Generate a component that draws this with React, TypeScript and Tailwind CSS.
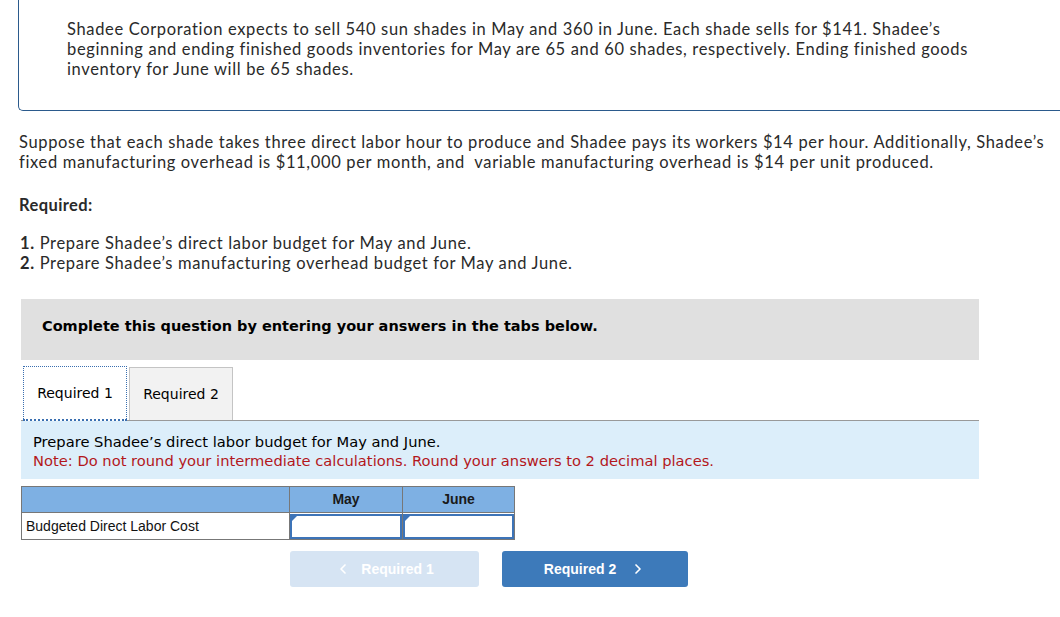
import React from "react";
import { ChevronLeft, ChevronRight } from "lucide-react";

export default function App() {
  const proxima = { fontFamily: "Lato, 'Open Sans', sans-serif" };
  return (
    <div className="w-[1060px] h-[617px] bg-white overflow-hidden text-[#222]">
      {/* Top box */}
      <div className="ml-[18px] mt-0 h-[111px] border-l border-b border-[#2b5a8c] rounded-bl-[5px] pt-[19px] pl-[48px]">
        <p className="text-[16.5px] leading-[20px] tracking-[0.65px] text-[#2a2a2a] whitespace-nowrap" style={proxima}>
          Shadee Corporation expects to sell 540 sun shades in May and 360 in June. Each shade sells for $141. Shadee’s
          <br />
          beginning and ending finished goods inventories for May are 65 and 60 shades, respectively. Ending finished goods
          <br />
          inventory for June will be 65 shades.
        </p>
      </div>

      <p className="ml-[19px] mt-[21px] text-[16.5px] leading-[20px] tracking-[0.65px] text-[#2a2a2a] whitespace-nowrap" style={proxima}>
        Suppose that each shade takes three direct labor hour to produce and Shadee pays its workers $14 per hour. Additionally, Shadee’s
        <br />
        fixed manufacturing overhead is $11,000 per month, and&nbsp; variable manufacturing overhead is $14 per unit produced.
      </p>

      <p className="ml-[19px] mt-[23px] text-[16.5px] leading-[20px] tracking-[0.4px] font-bold text-[#2a2a2a]" style={proxima}>Required:</p>

      <div className="ml-[20px] mt-[18px] text-[16.5px] leading-[20px] tracking-[0.65px] text-[#2a2a2a]" style={proxima}>
        <div><span className="font-bold">1.</span> Prepare Shadee’s direct labor budget for May and June.</div>
        <div><span className="font-bold">2.</span> Prepare Shadee’s manufacturing overhead budget for May and June.</div>
      </div>

      {/* Gray box */}
      <div
        className="ml-[21px] mt-[26px] w-[958px] h-[61px] bg-[#e0e0e0] pl-[21px] pt-[15px] font-bold text-black"
        style={{ fontFamily: "'DejaVu Sans', Verdana, sans-serif" }}
      >
        <span className="text-[14.5px] leading-[20px]">Complete this question by entering your answers in the tabs below.</span>
      </div>

      {/* Tabs */}
      <div className="ml-[21px] mt-[7px] w-[958px]" style={{ fontFamily: "'DejaVu Sans', Verdana, sans-serif" }}>
        <div className="flex items-end h-[54px] border-b border-[#999]">
          <div className="ml-[2px] w-[104px] h-[55px] -mb-px bg-white border border-dotted border-[#3a6fb0] border-b-[2px] flex items-center justify-center text-[14px] text-black">
            Required 1
          </div>
          <div className="ml-[2px] w-[104px] h-[53px] bg-[#f2f2f2] border border-[#c4c4c4] border-b-0 flex items-center justify-center text-[14px] text-black">
            Required 2
          </div>
        </div>
        <div className="bg-[#dceefa] h-[58px] pl-[12px] pt-[11px] text-[14.7px] leading-[19px]">
          <div className="text-black">Prepare Shadee’s direct labor budget for May and June.</div>
          <div className="text-[#b3171c]">Note: Do not round your intermediate calculations. Round your answers to 2 decimal places.</div>
        </div>
      </div>

      {/* Table */}
      <div className="ml-[21px] mt-[7px]" style={{ fontFamily: "'Liberation Sans', Arial, sans-serif" }}>
        <table className="border-collapse text-[14px]">
          <tbody>
            <tr className="bg-[#7eb0e3] h-[26px]">
              <td className="w-[268px] border border-[#777]"></td>
              <td className="w-[113px] border border-[#777] text-center font-bold text-[#1a1a1a]">May</td>
              <td className="w-[112px] border border-[#777] text-center font-bold text-[#1a1a1a]">June</td>
            </tr>
            <tr className="h-[27px]">
              <td className="border border-[#777] pl-[4px] text-[#111]">Budgeted Direct Labor Cost</td>
              <td className="border border-[#777] p-0">
                <div className="relative h-[25px] border-2 border-[#3d74b8] bg-white">
                  <div className="absolute left-0 top-0 w-0 h-0 border-t-[5px] border-r-[5px] border-t-[#3d74b8] border-r-transparent" />
                </div>
              </td>
              <td className="border border-[#777] p-0">
                <div className="relative h-[25px] border-2 border-[#3d74b8] bg-white">
                  <div className="absolute left-0 top-0 w-0 h-0 border-t-[5px] border-r-[5px] border-t-[#3d74b8] border-r-transparent" />
                </div>
              </td>
            </tr>
          </tbody>
        </table>
      </div>

      {/* Buttons */}
      <div className="flex ml-[290px] mt-[11px] gap-[23px]" style={{ fontFamily: "'Liberation Sans', Arial, sans-serif" }}>
        <div className="w-[189px] h-[36px] bg-[#d6e4f3] rounded-[3px] flex items-center justify-center text-white font-bold text-[14px]">
          <ChevronLeft size={16} strokeWidth={2.5} className="mr-[10px]" />
          Required 1
        </div>
        <div className="w-[186px] h-[36px] bg-[#3d7aba] rounded-[3px] flex items-center justify-center text-white font-bold text-[14px]">
          Required 2
          <ChevronRight size={16} strokeWidth={2.5} className="ml-[14px]" />
        </div>
      </div>
    </div>
  );
}
